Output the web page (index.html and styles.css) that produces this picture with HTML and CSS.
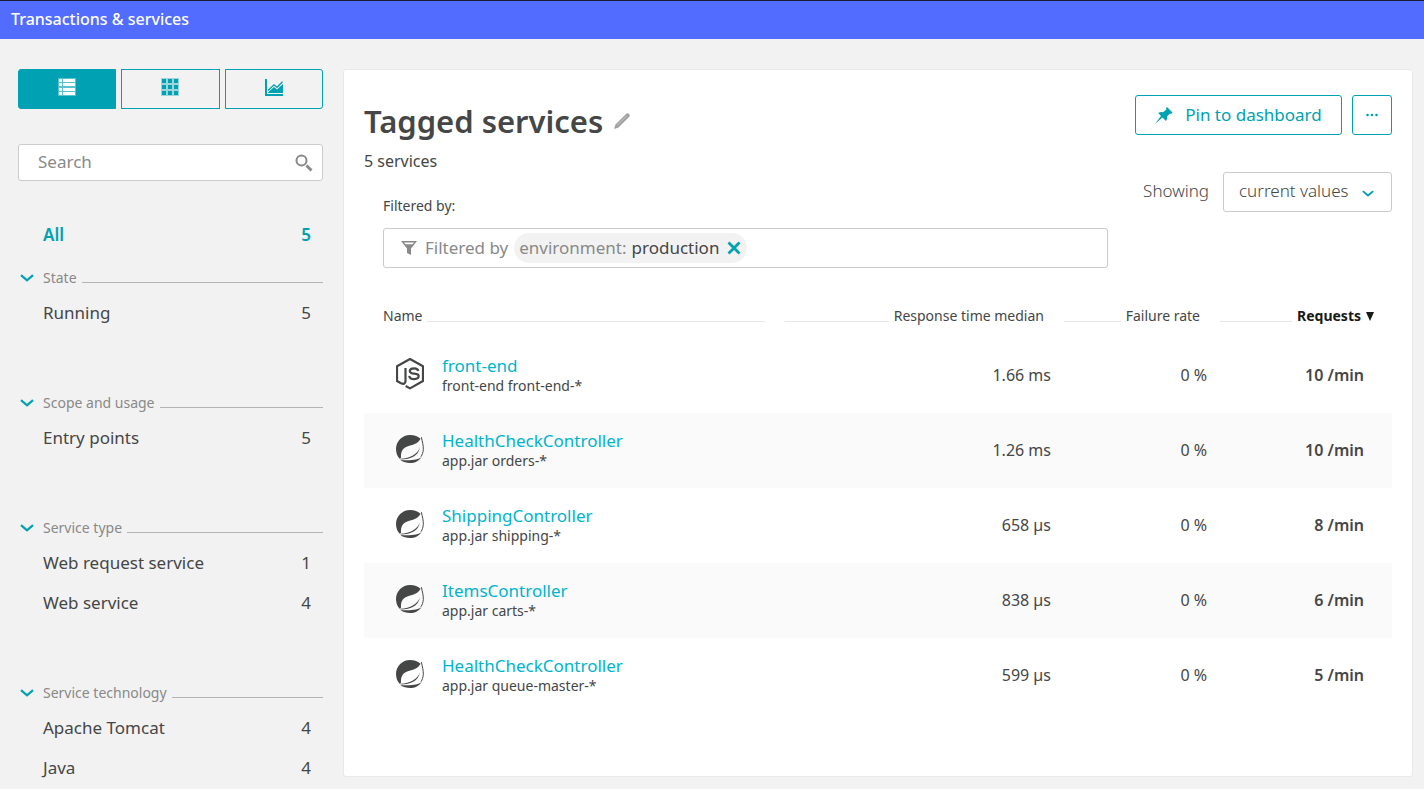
FILE: index.html
```
<!DOCTYPE html>
<html lang="en">
<head>
<meta charset="utf-8">
<title>Transactions &amp; services</title>
<meta name="viewport" content="width=device-width, initial-scale=1">
<link rel="stylesheet" href="styles.css">
</head>
<body>
<svg class="sprite" aria-hidden="true">
  <symbol id="chevron" viewBox="0 0 14 8"><path d="M1 1.200 7 6.400 13 1.200" fill="none" stroke="currentColor" stroke-width="2.200"/></symbol>
  <symbol id="spring" viewBox="0 0 28 28">
    <path fill="currentColor" d="M24.600 3.800C22.200 1.500 18.500 0 14 0 6.300 0 0 6.300 0 14c0 4 1.300 7.300 3.700 9.700 1-.4 1.300-.9 1.300-1.500C4.600 16 7.400 12.400 12.500 11c5-1.300 9-2 12.100-7.200z"/>
    <path fill="currentColor" d="M4.500 23.700c5-.4 9-1.200 12.400-3.300 3.600-2.200 6-4.900 7.300-8.400-1.200 5-3.500 7.700-6.500 9.600-3.500 2.200-7.600 2.800-13.200 2.800z"/>
    <path fill="currentColor" d="M4.500 25C7.400 27.200 10.500 28 14 28c5 0 9.200-2.200 11.700-6.300C22 25 15 25.700 4.500 25z"/>
    <path d="M25.400 2.200C26.200 6.500 27.500 10 27.300 14.500c-.2 3-1 5-2.300 7.200" fill="none" stroke="currentColor" stroke-width="1"/>
  </symbol>
</svg>

<header class="topbar"><a href="#services">Transactions &amp; services</a></header>

<div class="layout">
  <aside class="sidebar">
    <div class="views" role="group" aria-label="View">
      <button class="view view-on" type="button" aria-label="List" aria-pressed="true">
        <svg width="18" height="18" viewBox="0 0 18 18" fill="currentColor"><path d="M0 0h18v18H0z" opacity=".35"/><path d="M1 1h3v3H1zM5 1h12v3H5zM1 5h3v3H1zM5 5h12v3H5zM1 10h3v3H1zM5 10h12v3H5zM1 14h3v3H1zM5 14h12v3H5z"/></svg>
      </button>
      <button class="view" type="button" aria-label="Tiles" aria-pressed="false">
        <svg width="18" height="18" viewBox="0 0 18 18" fill="currentColor"><path d="M0 0h18v18H0z" opacity=".35"/><path d="M1 1h4v4H1zM7 1h4v4H7zM13 1h4v4h-4zM1 7h4v4H1zM7 7h4v4H7zM13 7h4v4h-4zM1 13h4v4H1zM7 13h4v4H7zM13 13h4v4h-4z"/></svg>
      </button>
      <button class="view" type="button" aria-label="Chart" aria-pressed="false">
        <svg width="18" height="18" viewBox="0 0 18 18" fill="currentColor"><path d="M0 1h2v15h16v2H0z"/><path d="M3 12.500 9 6.800l3 2.500 5.500-5.500" fill="none" stroke="currentColor" stroke-width="1.300"/><path d="M3 15v-.5L9 9l3 2.500L18 6v9z"/></svg>
      </button>
    </div>

    <div class="search">
      <input type="search" placeholder="Search" aria-label="Search">
      <svg width="18" height="18" viewBox="0 0 18 18" fill="none" stroke="currentColor"><circle cx="6.500" cy="6.500" r="5" stroke-width="2"/><path d="M11.500 11.500 16.500 16.500" stroke-width="3"/></svg>
    </div>

    <nav class="facets" aria-label="Filters">
      <a class="facet facet-on" href="#all"><span>All</span><span>5</span></a>
      <section class="group">
        <button class="group-head" type="button"><svg width="14" height="8"><use href="#chevron"/></svg><span>State</span><i></i></button>
        <a class="facet" href="#running"><span>Running</span><span>5</span></a>
      </section>
      <section class="group">
        <button class="group-head" type="button"><svg width="14" height="8"><use href="#chevron"/></svg><span>Scope and usage</span><i></i></button>
        <a class="facet" href="#entry"><span>Entry points</span><span>5</span></a>
      </section>
      <section class="group">
        <button class="group-head" type="button"><svg width="14" height="8"><use href="#chevron"/></svg><span>Service type</span><i></i></button>
        <a class="facet" href="#webrequest"><span>Web request service</span><span>1</span></a>
        <a class="facet" href="#webservice"><span>Web service</span><span>4</span></a>
      </section>
      <section class="group">
        <button class="group-head" type="button"><svg width="14" height="8"><use href="#chevron"/></svg><span>Service technology</span><i></i></button>
        <a class="facet" href="#tomcat"><span>Apache Tomcat</span><span>4</span></a>
        <a class="facet" href="#java"><span>Java</span><span>4</span></a>
      </section>
    </nav>
  </aside>

  <main class="card" id="services">
    <div class="card-top">
      <div class="intro">
        <div class="title-row">
          <h1>Tagged services</h1>
          <button class="icon-button edit" type="button" aria-label="Edit name">
            <svg width="16" height="16" viewBox="0 0 16 16"><path d="M0 16 1.500 11.500 12 1Q13.500-.3 15 1t0 3L4.500 14.500Z" fill="#a0a0a0"/><path d="M3 12.500 13 2.500" stroke="#ccc"/></svg>
          </button>
        </div>
        <p class="count">5 services</p>
        <div class="filter">
          <label for="filter">Filtered by:</label>
          <div class="filter-box">
            <svg class="funnel" width="16" height="14" viewBox="0 0 16 14"><path fill="currentColor" fill-rule="evenodd" d="M0 0h16L10 7.500V14L6 12V7.500ZM3 1.500 4.500 3.300h7L13 1.500Z"/></svg>
            <span class="filter-name">Filtered by</span>
            <span class="chip"><span>environment:</span><b>production</b>
              <button class="icon-button" type="button" aria-label="Remove filter"><svg width="14" height="14" viewBox="0 0 14 14"><path d="M1.500 1.500l11 11M12.500 1.500l-11 11" stroke="currentColor" stroke-width="2.800"/></svg></button>
            </span>
            <input id="filter" type="text">
          </div>
        </div>
      </div>
      <div class="tools">
        <div class="actions">
          <button class="action pin" type="button">
            <svg width="18" height="17" viewBox="0 0 18 17"><path fill="currentColor" d="M12 0 17.500 5.500 16 7 15 6.500 12 9.500Q12.500 12 11 14L7.500 10.500 0 17 6 9 3.200 6Q5.500 4.500 8 5.200L11.500 2.500 10.800 1.200Z"/></svg>
            Pin to dashboard
          </button>
          <button class="action more" type="button" aria-label="More">
            <svg width="12" height="4" viewBox="0 0 12 4" fill="currentColor"><circle cx="1.500" cy="2" r="1.300"/><circle cx="6" cy="2" r="1.300"/><circle cx="10.500" cy="2" r="1.300"/></svg>
          </button>
        </div>
        <div class="showing">
          <label for="values">Showing</label>
          <div class="select">
            <select id="values"><option>current values</option></select>
            <svg width="12" height="7"><use href="#chevron"/></svg>
          </div>
        </div>
      </div>
    </div>

    <table class="services">
      <colgroup><col><col class="col-time"><col class="col-rate"><col class="col-requests"></colgroup>
      <thead>
        <tr>
          <th><div class="head"><span>Name</span><i></i></div></th>
          <th><div class="head"><i></i><span>Response time median</span></div></th>
          <th><div class="head"><i></i><span>Failure rate</span></div></th>
          <th aria-sort="descending"><div class="head sorted"><i></i><span>Requests</span><svg width="8" height="9" viewBox="0 0 8 9"><path d="M0 0h8L4 9z" fill="currentColor"/></svg></div></th>
        </tr>
      </thead>
      <tbody>
        <tr>
          <td><div class="service">
            <svg class="logo" width="28" height="32" viewBox="0 0 28 32" fill="none" stroke="currentColor" stroke-width="2.200" stroke-linejoin="round"><path d="M9.700 28 14 30.400 27 23V8.300L14 1 1 8.300V23l4 2.300Q9.500 27 9.500 23V10"/><path d="M22.200 13c-.3-2.200-1.800-2.700-4-2.700-2.900 0-4.400.9-4.400 2.700 0 4.500 8.900 1 8.900 5.100 0 2.200-1.700 3-4.400 3-3.200 0-4.800-.9-5-3.300"/></svg>
            <div><a href="#front-end">front-end</a><small>front-end front-end-*</small></div>
          </div></td>
          <td>1.66 ms</td><td>0 %</td><td>10 /min</td>
        </tr>
        <tr>
          <td><div class="service"><svg class="logo" width="28" height="32"><use href="#spring"/></svg><div><a href="#orders">HealthCheckController</a><small>app.jar orders-*</small></div></div></td>
          <td>1.26 ms</td><td>0 %</td><td>10 /min</td>
        </tr>
        <tr>
          <td><div class="service"><svg class="logo" width="28" height="32"><use href="#spring"/></svg><div><a href="#shipping">ShippingController</a><small>app.jar shipping-*</small></div></div></td>
          <td>658 µs</td><td>0 %</td><td>8 /min</td>
        </tr>
        <tr>
          <td><div class="service"><svg class="logo" width="28" height="32"><use href="#spring"/></svg><div><a href="#carts">ItemsController</a><small>app.jar carts-*</small></div></div></td>
          <td>838 µs</td><td>0 %</td><td>6 /min</td>
        </tr>
        <tr>
          <td><div class="service"><svg class="logo" width="28" height="32"><use href="#spring"/></svg><div><a href="#queue">HealthCheckController</a><small>app.jar queue-master-*</small></div></div></td>
          <td>599 µs</td><td>0 %</td><td>5 /min</td>
        </tr>
      </tbody>
    </table>
  </main>
</div>
</body>
</html>
```
FILE: styles.css
```
* { box-sizing: border-box; }
body {
  margin: 0;
  background: #f2f2f2;
  color: #454646;
  font: 17px/20px "Noto Sans", "Open Sans", sans-serif;
}
button, input, select { font: inherit; color: inherit; }
button { cursor: pointer; padding: 0; border: 0; background: none; }
a { color: inherit; text-decoration: none; }
svg { flex: none; }
.sprite { display: none; }

.topbar {
  height: 39px;
  padding: 0 11px;
  border-top: 1px solid #1b1c33;
  background: #526cff;
  color: #fff;
  font-size: 16px;
  font-weight: 500;
  line-height: 36px;
}

.layout { display: flex; gap: 20px; padding: 30px 11px 0 18px; }

.sidebar { flex: none; width: 305px; }
.views { display: grid; grid-template-columns: repeat(3, 1fr); gap: 5px; }
.view {
  display: flex;
  align-items: center;
  justify-content: center;
  height: 40px;
  padding-bottom: 4px;
  border: 1px solid #00a1b2;
  color: #00a1b2;
}
.view:first-child { border-radius: 3px 0 0 3px; }
.view:last-child { border-radius: 0 3px 3px 0; }
.view-on { background: #00a1b2; color: #fff; }

.search {
  display: flex;
  align-items: center;
  height: 37px;
  margin-top: 35px;
  padding: 0 9px 0 19px;
  border: 1px solid #ccc;
  border-radius: 3px;
  background: #fff;
  color: #898989;
}
.search input { flex: 1; min-width: 0; padding: 0 0 2px; border: 0; outline: 0; background: none; }
.search input::placeholder { color: #898989; opacity: 1; }

.facets { padding-top: 34px; }
.facet {
  display: flex;
  justify-content: space-between;
  padding: 0 12px 0 25px;
  line-height: 40px;
}
.facet-on { margin-bottom: 8px; color: #00a1b2; font-weight: 600; }
.group + .group { margin-top: 55px; }
.group-head {
  display: flex;
  align-items: center;
  width: 100%;
  height: 30px;
  padding-left: 2px;
  color: #898989;
  font-size: 14px;
}
.group-head svg { margin-right: 9px; color: #00a1b2; }
.group-head i { flex: 1; height: 10px; margin-left: 5px; border-bottom: 1px solid #b4b4b4; }

.card {
  flex: 1;
  min-width: 0;
  margin-bottom: 11px;
  padding: 25px 20px 0;
  border: 1px solid #e9e9e9;
  border-radius: 3px;
  background: #fff;
}
.card-top { display: flex; gap: 27px; }
.intro { flex: 1; min-width: 0; }
.title-row { display: flex; align-items: center; gap: 11px; height: 52px; }
h1 { margin: 0; font-size: 31px; line-height: 52px; font-weight: 600; }
.icon-button { display: flex; }
.count { margin: 0; font-size: 16px; line-height: 28px; }
.filter { padding: 19px 0 0 19px; }
.filter label { display: block; font-size: 14px; line-height: 24px; }
.filter-box {
  display: flex;
  align-items: center;
  height: 40px;
  margin-top: 10px;
  padding: 0 17px;
  border: 1px solid #ccc;
  border-radius: 3px;
  color: #898989;
}
.filter-name { margin: 0 6px 0 8px; }
.chip {
  display: flex;
  align-items: center;
  height: 30px;
  padding: 0 6px 0 5px;
  border-radius: 15px;
  background: #f2f2f2;
}
.chip b { margin: 0 8px 0 5px; color: #454646; font-weight: 400; }
.chip button { color: #00a1b2; }
.filter-box input { flex: 1; min-width: 0; border: 0; outline: 0; background: none; }

.tools { flex: none; width: 257px; }
.actions { display: flex; gap: 10px; }
.action {
  display: flex;
  align-items: center;
  justify-content: center;
  height: 40px;
  border: 1px solid #00a1b2;
  border-radius: 3px;
  color: #00a1b2;
}
.pin { flex: 1; gap: 12px; }
.more { width: 40px; }
.showing { display: flex; align-items: center; justify-content: flex-end; gap: 14px; margin-top: 37px; font-weight: 300; }
.showing label { padding-bottom: 3px; }
.select { position: relative; width: 169px; }
.select select {
  width: 100%;
  height: 40px;
  padding: 0 15px 2px;
  border: 1px solid #ccc;
  border-radius: 3px;
  background: #fff;
  appearance: none;
}
.select svg { position: absolute; right: 18px; top: 18px; color: #00a1b2; }

.services { width: 100%; margin-top: 26px; border-collapse: collapse; table-layout: fixed; }
.col-time { width: 279px; }
.col-rate { width: 156px; }
.col-requests { width: 182px; }
.services th { height: 44px; padding: 0 10px; font-size: 14px; font-weight: 400; }
.services th:first-child { padding-left: 19px; }
.services th:last-child { padding-right: 18px; }
.head { display: flex; align-items: center; gap: 5px; }
.head i { flex: 1; height: 12px; border-bottom: 1px solid #e6e6e6; }
.sorted { color: #191919; font-weight: 700; }
.services td { height: 75px; padding: 0 3px 2px 0; font-size: 16px; text-align: right; }
.services td:first-child { padding: 0 10px 0 32px; font-size: 17px; text-align: left; }
.services td:last-child { padding-right: 28px; font-weight: 600; }
.services tbody tr:nth-child(even) { background: #fafafa; }
.service { display: flex; align-items: center; gap: 18px; }
.service a { display: block; color: #00b4cc; }
.service small { display: block; font-size: 14px; line-height: 20px; }
.logo { margin-bottom: 4px; }
```
